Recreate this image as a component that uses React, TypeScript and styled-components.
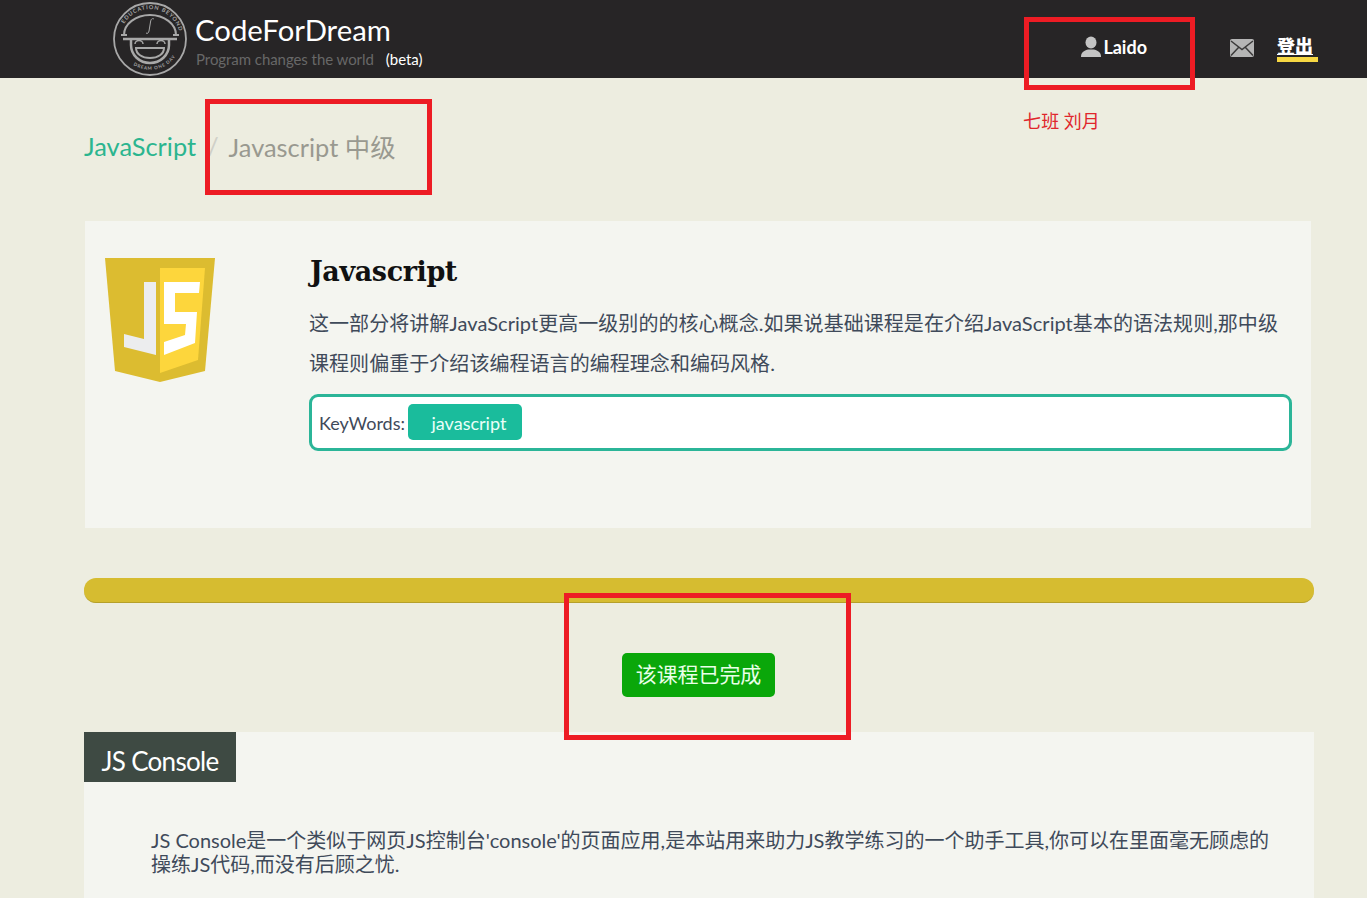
import React from "react";
import styled, { createGlobalStyle } from "styled-components";

const Global = createGlobalStyle`
  html, body { margin: 0; padding: 0; background: #edede0; }
  body { font-family: Lato, "Noto Sans CJK SC", sans-serif; color: #3f4a5a; overflow: hidden; }
  * { box-sizing: border-box; }
`;
const Page = styled.div`position: relative; width: 1367px; height: 898px; overflow: hidden;`;
const Header = styled.header`
  height: 78px; background: #272526; display: flex; align-items: center; padding: 0 49px 0 113px;
`;
const Brand = styled.div`display: flex; flex-direction: column; margin-left: 9px; padding-top: 4px;`;
const Title = styled.div`font-size: 29.3px; line-height: 34px; color: #fff; margin-left: -1px;`;
const Sub = styled.div`display: flex; gap: 12px; font-size: 15px; line-height: 20px; margin-top: 2px; color: #686868; letter-spacing: -0.06px;`;
const Beta = styled.span`color: #fff; font-size: 15px;`;
const Nav = styled.nav`margin-left: auto; display: flex; align-items: center; padding-top: 15px;`;
const User = styled.div`display: flex; align-items: center; gap: 2px; font-size: 18px; font-weight: 700; color: #fff; line-height: 22px;`;
const Mail = styled.svg`margin: 3px 23px 0 83px; display: block;`;
const Logout = styled.div`
  width: 41px; height: 29px; margin-top: 2px; font-size: 18px; font-weight: 900; color: #fff; line-height: 24px;
  border-bottom: 5px solid #f6d743; font-family: "Noto Sans CJK SC", sans-serif; text-decoration: underline; text-underline-offset: 1px;
`;
const Crumbs = styled.div`display: flex; align-items: center; height: 143px; padding: 0 0 8px 84px; font-size: 25.4px;`;
const CrumbLink = styled.span`color: #2bb58f;`;
const Slash = styled.span`color: #d0d0c8; margin: 0 10px 0 11px;`;
const CrumbCur = styled.span`color: #999990;`;
const Card = styled.section`
  margin-left: 85px; width: 1226px; height: 307px; background: #f4f5f0; display: flex; padding: 37px 19px 0 20px;
`;
const Badge = styled.svg`flex: none; display: block;`;
const Body = styled.div`margin-left: 94px; flex: 1;`;
const Heading = styled.h2`
  margin: 0 0 0 1px; font-family: "DejaVu Serif", serif; font-weight: 700; font-size: 27px; line-height: 28px; color: #111; letter-spacing: -0.4px;
`;
const Desc = styled.p`margin: 17px 0 0; font-size: 20px; line-height: 40px; color: #3f4a5a; width: 975px; letter-spacing: 0.05px;`;
const Keywords = styled.div`
  margin-top: 11px; height: 57px; width: 983px; background: #fff; border: 3px solid #2bb598; border-radius: 9px;
  display: flex; align-items: center; padding-left: 7px; font-size: 18px;
`;
const Tag = styled.span`
  margin: 0 0 2px 3px; width: 114px; height: 36px; background: #1abc9c; border-radius: 5px; color: #eafff8;
  display: flex; align-items: center; justify-content: center; padding: 2px 0 0 8px; font-size: 18px;
`;
const Bar = styled.div`
  margin: 50px 0 0 84px; width: 1230px; height: 25px; background: #d6bc30; border-radius: 12px; border-bottom: 1px solid #b5a02a;
`;
const BtnRow = styled.div`display: flex; padding: 50px 0 0 622px;`;
const Done = styled.button`
  width: 153px; height: 44px; border: 0; border-radius: 5px; background: #0aa70a; color: #e8ffe8;
  font: 21px "Noto Sans CJK SC", sans-serif; letter-spacing: -0.1px; padding: 0 0 4px;
`;
const Console = styled.section`margin: 35px 0 0 84px; width: 1230px; height: 300px; background: #f4f5f0;`;
const Tab = styled.div`
  width: 152px; height: 50px; background: #3e4a43; color: #fff; font-size: 26px; display: flex; align-items: center; justify-content: center;
  padding-top: 8px; letter-spacing: -0.7px;
`;
const ConsoleText = styled.p`
  margin: 46px 0 0 67px; width: 1125px; font-size: 20px; line-height: 24px; color: #3f4a5a; letter-spacing: 0;
`;
const Annot = styled.div<{ $x: number; $y: number; $w: number; $h: number }>`
  position: absolute; left: ${p => p.$x}px; top: ${p => p.$y}px; width: ${p => p.$w}px; height: ${p => p.$h}px;
  border: 5px solid #ed1c24; pointer-events: none;
`;
const AnnotText = styled.div`
  position: absolute; left: 1023px; top: 108px; font: 18px/24px "Noto Sans CJK SC", sans-serif; color: #e0262c; letter-spacing: 0.2px;
`;

const Logo = () => (
  <svg width="74" height="74" viewBox="0 0 74 74" fill="none" stroke="#a8a8a8">
    <defs>
      <path id="ringTop" d="M7 37a30 30 0 0 1 60 0" />
      <path id="ringBot" d="M10 52a31 31 0 0 0 54 0" />
    </defs>
    <circle cx="37" cy="37" r="36" strokeWidth="1.8" />
    <text fontSize="5.500" fontWeight="700" fill="#a8a8a8" stroke="none" letterSpacing="0.9" fontFamily="Lato, sans-serif">
      <textPath href="#ringTop" startOffset="16">EDUCATION BEYOND</textPath>
    </text>
    <text fontSize="4.500" fontWeight="700" fill="#a8a8a8" stroke="none" letterSpacing="0.8" fontFamily="Lato, sans-serif">
      <textPath href="#ringBot" startOffset="15">DREAM ONE DAY</textPath>
    </text>
    <path d="M11 33a26 20 0 0 1 52 0" strokeWidth="2" />
    <path d="M8 33h6M60 33h6" strokeWidth="2" />
    <path d="M41 17c-2-1-3 0-3.500 3l-1.500 9c-.4 2-1.500 3-3 2" strokeWidth="1" />
    <path d="M10 37h54" strokeWidth="2.500" />
    <path d="M18 37v6a19 18 0 0 0 38 0v-6" strokeWidth="2.500" />
    <path d="M23 46h28c0 6-6 10-14 10s-14-4-14-10z" strokeWidth="2" />
    <path d="M22 42a4 3.500 0 0 1 8 0M44 42a4 3.500 0 0 1 8 0" strokeWidth="1.500" />
  </svg>
);

export default function App() {
  return (
    <Page>
      <Global />
      <Header>
        <Logo />
        <Brand>
          <Title>CodeForDream</Title>
          <Sub><span>Program changes the world</span><Beta>(beta)</Beta></Sub>
        </Brand>
        <Nav>
          <User>
            <svg width="20" height="21" viewBox="0 0 20 21" fill="#c4c4c4">
              <ellipse cx="10" cy="6.500" rx="5.500" ry="6" />
              <path d="M0 21c0-4 2-6 7-7.500h6c5 1.500 7 3.500 7 7.500z" />
            </svg>
            Laido
          </User>
          <Mail width="24" height="18" viewBox="0 0 24 18">
            <rect width="24" height="18" rx="2" fill="#b5b5b5" />
            <path d="M1 2l11 8.500L23 2M1 16.500l8-8.500M23 16.500l-8-8.500" stroke="#3b3a3a" strokeWidth="1.500" fill="none" />
          </Mail>
          <Logout>登出</Logout>
        </Nav>
      </Header>
      <Crumbs>
        <CrumbLink>JavaScript</CrumbLink>
        <Slash>/</Slash>
        <CrumbCur>Javascript 中级</CrumbCur>
      </Crumbs>
      <Card>
        <Badge width="110" height="124" viewBox="0 0 110 124">
          <path d="M0 0h110l-10 113-45 11-45-11z" fill="#dcbc30" />
          <path d="M55 10h45l-7 92-38 13z" fill="#fdd63c" />
          <path d="M39 24h12v73l-32-8V76l20 5z" fill="#ecedee" />
          <path d="M59 24h36l-1 11H70v19h22l-2 31-31 12V84l21-7 1-11H59z" fill="#fff" />
        </Badge>
        <Body>
          <Heading>Javascript</Heading>
          <Desc>这一部分将讲解JavaScript更高一级别的的核心概念.如果说基础课程是在介绍JavaScript基本的语法规则,那中级课程则偏重于介绍该编程语言的编程理念和编码风格.</Desc>
          <Keywords>KeyWords:<Tag>javascript</Tag></Keywords>
        </Body>
      </Card>
      <Bar />
      <BtnRow><Done>该课程已完成</Done></BtnRow>
      <Console>
        <Tab>JS Console</Tab>
        <ConsoleText>JS Console是一个类似于网页JS控制台'console'的页面应用,是本站用来助力JS教学练习的一个助手工具,你可以在里面毫无顾虑的操练JS代码,而没有后顾之忧.</ConsoleText>
      </Console>
      <Annot $x={1024} $y={17} $w={171} $h={73} />
      <AnnotText>七班 刘月</AnnotText>
      <Annot $x={205} $y={99} $w={227} $h={96} />
      <Annot $x={564} $y={593} $w={287} $h={147} />
    </Page>
  );
}
